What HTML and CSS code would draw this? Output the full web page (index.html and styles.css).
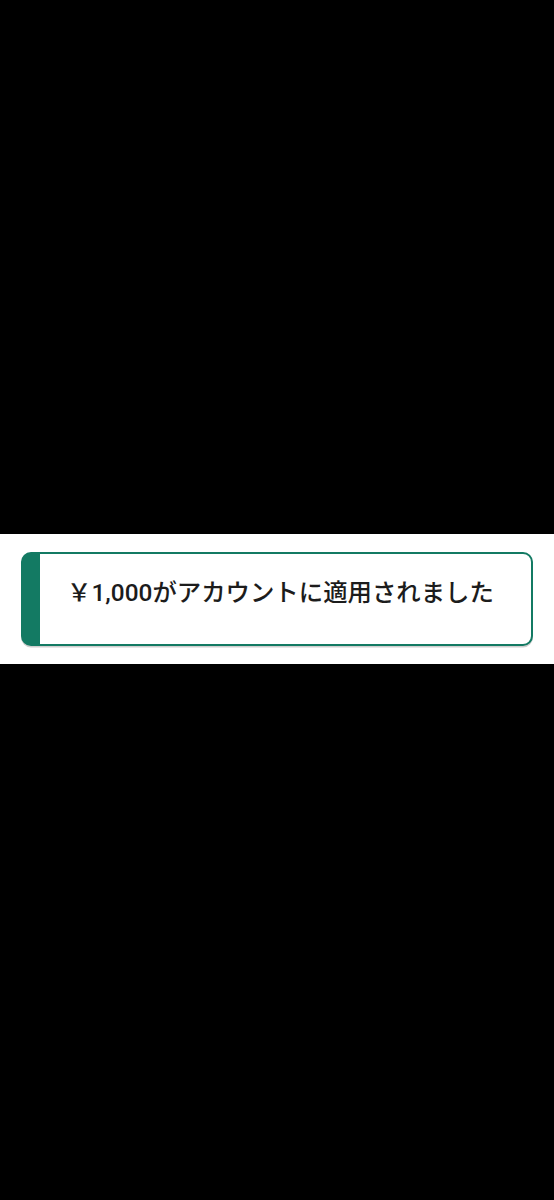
FILE: index.html
```html
<!DOCTYPE html>
<html lang="ja">
<head>
<meta charset="utf-8">
<link rel="stylesheet" href="styles.css">
</head>
<body>
<div class="screen">
  <div class="top-space"></div>
  <div class="toast-band">
    <div class="toast">
      <p class="toast-text">￥1,000がアカウントに適用されました</p>
    </div>
  </div>
  <div class="bottom-space"></div>
</div>
</body>
</html>
```

FILE: styles.css
```css
html, body {
  margin: 0;
  padding: 0;
  background: #000;
}
.screen {
  width: 554px;
  height: 1200px;
  display: flex;
  flex-direction: column;
}
.top-space {
  height: 534px;
  background: #000;
}
.toast-band {
  height: 130px;
  background: #fff;
  padding: 18px 21px 0 21px;
  box-sizing: border-box;
}
.toast {
  height: 94px;
  box-sizing: border-box;
  border: 2.5px solid #137a63;
  border-left: 19px solid #137a63;
  border-radius: 10px;
  background: #fff;
  box-shadow: 0 1.5px 0 #cfcfcf;
  display: flex;
  align-items: flex-start;
  justify-content: center;
  padding-right: 10px;
}
.toast-text {
  margin: 19px 0 0 0;
  font-family: "Roboto", "Noto Sans CJK JP", sans-serif;
  font-size: 24.4px;
  font-weight: 500;
  line-height: 40px;
  color: #1c1c1c;
  white-space: nowrap;
}
.bottom-space {
  flex: 1;
  background: #000;
}
```
